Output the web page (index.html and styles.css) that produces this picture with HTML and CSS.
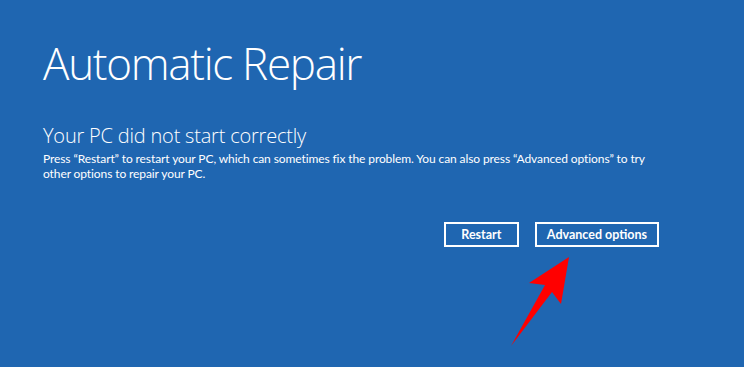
FILE: index.html
```html
<!DOCTYPE html>
<html lang="en">
<head>
    <meta charset="UTF-8">
    <meta name="viewport" content="width=device-width, initial-scale=1.0">
    <title>Automatic Repair</title>
    <link rel="stylesheet" href="styles.css">
</head>
<body>
    <div class="screen">
        <h1 class="title">Automatic Repair</h1>

        <h2 class="subtitle">Your PC did not start correctly</h2>
        <p class="message">Press “Restart” to restart your PC, which can sometimes fix the problem. You can also press “Advanced options” to try other options to repair your PC.</p>

        <div class="actions">
            <button class="btn">Restart</button>
            <button class="btn">Advanced options</button>
        </div>
    </div>

    <!-- red pointer arrow drawn over the screen -->
    <svg class="pointer" width="744" height="367" viewBox="0 0 744 367">
        <polygon points="569,257 561,304 552,292 511,346 545,285 529,283" fill="#ff0000"/>
    </svg>
</body>
</html>
```

FILE: styles.css
```css
body {
    margin: 0;
    padding: 0;
    background-color: #1f66b1;
    color: #fff;
    font-family: "Open Sans", Arial, sans-serif;
    width: 744px;
    height: 367px;
    overflow: hidden;
    position: relative;
}

.screen {
    padding: 35px 85px 0 43px;
}

.title {
    margin: 0;
    font-size: 44px;
    font-weight: 300;
    line-height: 56px;
    letter-spacing: -1.3px;
}

.subtitle {
    margin: 32px 0 0;
    font-size: 20px;
    font-weight: 300;
    line-height: 26px;
    letter-spacing: -0.2px;
}

.message {
    margin: 2px 0 0;
    font-family: Lato, "Open Sans", sans-serif;
    font-size: 12px;
    line-height: 15px;
    letter-spacing: -0.1px;
    max-width: 612px;
}

.actions {
    display: flex;
    justify-content: flex-end;
    gap: 16px;
    margin-top: 41px;
}

.btn {
    font-family: Lato, "Open Sans", sans-serif;
    font-size: 12.5px;
    font-weight: 700;
    color: #fff;
    background: transparent;
    border: 2px solid #fff;
    height: 25px;
    min-width: 75px;
    padding: 0 10px;
}

.pointer {
    position: absolute;
    left: 0;
    top: 0;
}
```
